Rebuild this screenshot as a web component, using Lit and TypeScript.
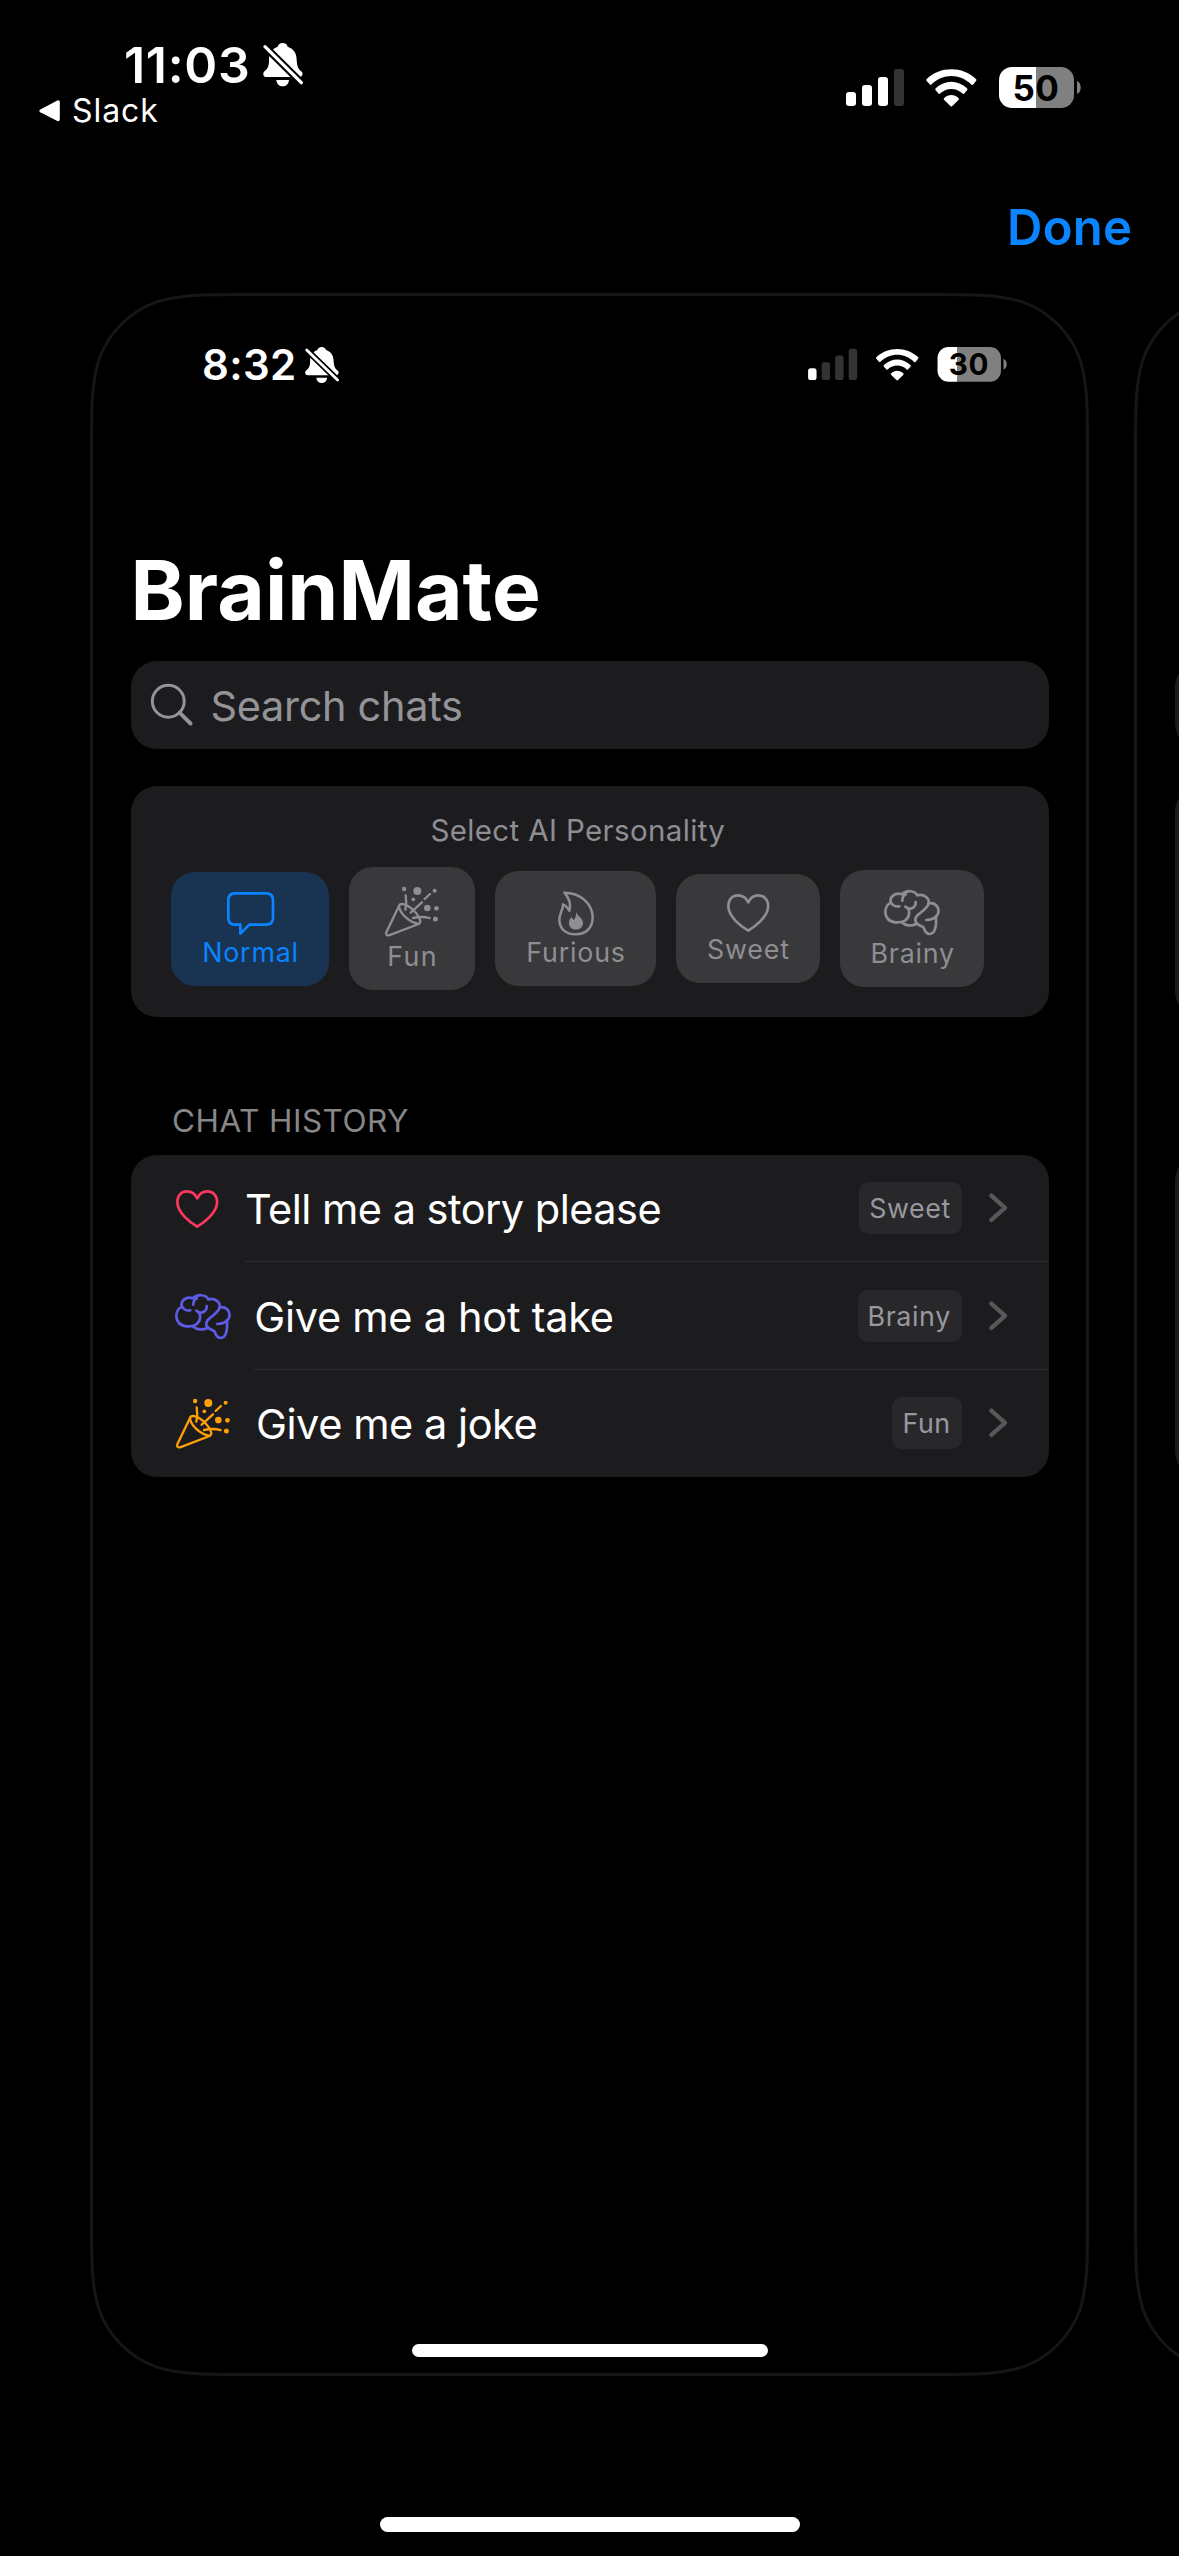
import { LitElement, html, svg, css } from "lit";
import type { SVGTemplateResult } from "lit";

type IconName = "bubble" | "popper" | "flame" | "heart" | "brain" | "search" | "chevron" | "bell" | "back";

interface IconDef {
  box: string;
  art: SVGTemplateResult;
}

const ICONS: Record<IconName, IconDef> = {
  bubble: {
    box: "321 365 141 129",
    art: svg`<path class="line" stroke-width="8" d="M345 369 H438 Q459 369 459 390 V442 Q459 463 438 463 H388 L361 490 V463 H345 Q325 463 325 442 V390 Q325 369 345 369Z"/>`,
  },
  popper: {
    box: "795 350 163 152",
    art: svg`
      <g class="line" stroke-width="7">
        <path d="M837 410 L799 489 Q796 499 807 498 L896 464"/>
        <path d="M837 412 Q838 402 850 404.500 C876 411 898 440 901 455 Q901 464 892 463 C866 457 842 434 837 412Z"/>
        <path d="M857 378 Q861 400 856 421"/>
        <path d="M906 399 L872 430"/>
        <path d="M914 389 L930 374"/>
        <path d="M879 446 Q906 440 929 446"/>
      </g>
      <g class="solid">
        <circle cx="852.500" cy="359" r="6.500"/><circle cx="892" cy="365" r="12"/>
        <circle cx="880" cy="390" r="5.500"/><circle cx="944" cy="364" r="6"/>
        <circle cx="922" cy="416" r="10"/><circle cx="949.500" cy="417" r="7"/>
        <circle cx="946.500" cy="449" r="7.500"/>
      </g>`,
  },
  flame: {
    box: "233 362 108 134",
    art: svg`
      <path class="line" stroke-width="7.500" d="M252 367 C300 367 336 400 337 440 C337 475 315 492 286 492 C255 492 237 475 237 448 C237 430 249 418 248 402 C256 405 262 413 267 422 C273 400 266 382 252 367Z"/>
      <path class="solid" d="M288 425 C292 440 308 442 308 458 C308 470 300 478 287 478 C274 478 266 470 266 458 C266 448 270 443 274 440 C276 445 278 447 280 449 C286 443 288 433 288 425Z"/>`,
  },
  heart: {
    box: "740 372 128 114",
    art: svg`<path class="line" stroke-width="8" d="M804 482 C785 471 744 441 744 408 C744 388 757 376 773 376 C787 376 798 384 804 397 C810 384 820 376 834 376 C850 376 864 388 864 408 C864 441 822 471 804 482Z"/>`,
  },
  brain: {
    box: "254 362 167 136",
    art: svg`
      <g class="line" stroke-width="8">
        <path d="M275 400 C251 411 250 454 288 459 C300 460 309 459 317 454 C333 442 334 420 318 412"/>
        <path d="M275 400 C269 384 286 368 308 375 C320 362 346 362 354 378 C375 373 391 387 388 402 C384 426 345 432 348 454 Q351 466 372 473 C376 482 378 494 391 494 C408 494 412 470 410 440"/>
        <path d="M309 460 C318 470 338 471 351 464"/>
        <path d="M388 402 C412 398 424 420 414 438 C406 449 396 452 381 452"/>
        <path d="M275 400 C280 408 289 413 300 411"/>
        <path d="M309 394 C309 386 312 378 320 375"/>
        <path d="M349 398 C351 412 337 421 326 417"/>
      </g>`,
  },
  search: {
    box: "92 131 125 125",
    art: svg`
      <circle class="line" cx="144" cy="183" r="48" stroke-width="9"/>
      <path class="line" d="M178 217 L211 250" stroke-width="12"/>`,
  },
  chevron: {
    box: "626 282 56 89",
    art: svg`<path class="line" stroke-width="13" d="M633 290 L674 326.500 L633 363"/>`,
  },
  bell: {
    box: "787 71 120 130",
    art: svg`
      <path class="solid" d="M846 71 C854 71 860 76 861 82 C880 88 888 103 888 122 C889 142 893 150 904 158 C908 163 905 173 897 173 H797 C787 173 786 162 790 157 C802 148 805 140 805 122 C805 103 813 88 831 82 C832 76 838 71 846 71Z"/>
      <path class="solid" d="M827 182 H865 C864 194 856 201 846 201 C836 201 828 194 827 182Z"/>
      <path d="M780 69 L914 202" stroke="#000" stroke-width="22"/>
      <path class="line" d="M793 82 L902 190" stroke-width="10"/>`,
  },
  back: {
    box: "0 0 63 63",
    art: svg`<path class="solid" d="M4 28 L55 1.500 Q62.500 -1 62.500 7 V56 Q62.500 64 55 61.500 L4 36 Q-2.500 32 4 28Z"/>`,
  },
};

class UiIcon extends LitElement {
  static properties = { name: {} };
  declare name: IconName;
  static styles = css`
    :host { display: block; flex: none; }
    .art { display: block; width: 100%; height: 100%; overflow: visible; }
    .line { fill: none; stroke: currentColor; stroke-linecap: round; stroke-linejoin: round; }
    .solid { fill: currentColor; }
  `;
  render() {
    const icon = ICONS[this.name];
    return html`<svg class="art" viewBox=${icon.box} preserveAspectRatio="none">${icon.art}</svg>`;
  }
}
customElements.define("ui-icon", UiIcon);

/* Signal bars, Wi-Fi and battery, drawn on a 235x41 board that scales as one. */
class StatusGlyphs extends LitElement {
  static properties = { bars: { type: Number }, level: { type: Number } };
  declare bars: number;
  declare level: number;
  static styles = css`
    :host { display: block; flex: none; }
    .board { display: block; width: 100%; height: 100%; overflow: visible; }
    .on { fill: #fff; }
    .off { fill: #333; }
    .rest { fill: #808080; }
    .level { font: 700 35px Inter, "Liberation Sans", sans-serif; letter-spacing: 0.5px; fill: #000; text-anchor: middle; }
  `;
  render() {
    const heights = [14, 21, 29, 37];
    const split = `${this.level}%`;
    return html`<svg class="board" viewBox="0 0 235 41">
      <defs>
        <linearGradient id="charge">
          <stop offset=${split} stop-color="#fff" />
          <stop offset=${split} stop-color="#808080" />
        </linearGradient>
      </defs>
      ${heights.map(
        (h, i) => svg`<rect class=${i < this.bars ? "on" : "off"} x=${i * 16} y=${39 - h} width="10" height=${h} rx="3"/>`,
      )}
      <g class="on" transform="translate(80 2) scale(0.33333) translate(-378 -86)">
        <path d="M380 116 C420 77 488 77 528 116 Q531 119 528 122 L519 133 Q516 135 513 132 C480 99 428 99 395 132 Q392 135 389 132 L380 122 Q377 119 380 116Z" />
        <path d="M407 144 C434 117.500 474 117.500 501 144 Q504 147 501 150 L492 160 Q490 162 487 159 C468 141.500 440 141.500 421 159 Q418 162 416 160 L407 150 Q404 147 407 144Z" />
        <path d="M432 174 C445 161 463 161 476 174 Q478 176 476 178 L457 197 Q454 200 451 197 L432 178 Q430 176 432 174Z" />
      </g>
      <rect x="153" y="0" width="75" height="41" rx="13" fill="url(#charge)" />
      <path class="rest" d="M231 14 C236 16 236 25 231 27Z" />
      <text class="level" x="190" y="33.500">${this.level}</text>
    </svg>`;
  }
}
customElements.define("status-glyphs", StatusGlyphs);

/* Rounded rectangle with continuous-curvature corners. */
function squircle(x: number, y: number, w: number, h: number, r: number): string {
  const a = 1.52866 * r, b = 1.08849 * r, c = 0.86841 * r, d = 0.63149 * r, e = 0.37282 * r, f = 0.16906 * r, g = 0.07491 * r;
  const R = x + w, B = y + h;
  return [
    `M${x + a} ${y}H${R - a}`,
    `C${R - b} ${y} ${R - c} ${y} ${R - d} ${y + g}`,
    `C${R - e} ${y + f} ${R - f} ${y + e} ${R - g} ${y + d}`,
    `C${R} ${y + c} ${R} ${y + b} ${R} ${y + a}V${B - a}`,
    `C${R} ${B - b} ${R} ${B - c} ${R - g} ${B - d}`,
    `C${R - f} ${B - e} ${R - e} ${B - f} ${R - d} ${B - g}`,
    `C${R - c} ${B} ${R - b} ${B} ${R - a} ${B}H${x + a}`,
    `C${x + b} ${B} ${x + c} ${B} ${x + d} ${B - g}`,
    `C${x + e} ${B - f} ${x + f} ${B - e} ${x + g} ${B - d}`,
    `C${x} ${B - c} ${x} ${B - b} ${x} ${B - a}V${y + a}`,
    `C${x} ${y + b} ${x} ${y + c} ${x + g} ${y + d}`,
    `C${x + f} ${y + e} ${x + e} ${y + f} ${x + d} ${y + g}`,
    `C${x + c} ${y} ${x + b} ${y} ${x + a} ${y}Z`,
  ].join("");
}

const PERSONALITIES: { label: string; icon: IconName; active?: boolean }[] = [
  { label: "Normal", icon: "bubble", active: true },
  { label: "Fun", icon: "popper" },
  { label: "Furious", icon: "flame" },
  { label: "Sweet", icon: "heart" },
  { label: "Brainy", icon: "brain" },
];

const CHATS: { title: string; tag: string; icon: IconName }[] = [
  { title: "Tell me a story please", tag: "Sweet", icon: "heart" },
  { title: "Give me a hot take", tag: "Brainy", icon: "brain" },
  { title: "Give me a joke", tag: "Fun", icon: "popper" },
];

class PhonePreview extends LitElement {
  static properties = { peek: { type: Boolean } };
  declare peek: boolean;
  static styles = css`
    :host { display: block; flex: none; }
    .card { position: relative; box-sizing: border-box; width: 999px; height: 2083px; padding: 0 40px 19.5px 41px; display: flex; flex-direction: column; }
    .outline { position: absolute; inset: 0; width: 999px; height: 2083px; fill: none; stroke: #161616; stroke-width: 3; pointer-events: none; }
    .status { flex: none; height: 143px; display: flex; align-items: center; padding: 0 42px 0 71px; }
    .clock { font-size: 42px; font-weight: 600; letter-spacing: 0.3px; line-height: 50px; }
    .bell { width: 34px; height: 36px; margin-left: 9px; margin-right: auto; }
    .glyphs { width: 199px; height: 34.7px; }
    .title { margin: 109.7px 0 0 -0.5px; height: 90px; font-size: 82px; font-weight: 700; line-height: 90px; letter-spacing: 0.1px; }
    .search { flex: none; box-sizing: border-box; margin-top: 25.3px; height: 88px; border-radius: 26px; background: #1c1c1e; color: #939398; display: flex; align-items: center; gap: 18px; padding-left: 20px; font-size: 41.5px; letter-spacing: -0.33px; }
    .search span { padding-top: 2px; }
    .lens { width: 41.5px; height: 41.5px; }
    .panel { flex: none; box-sizing: border-box; margin-top: 36.7px; height: 231.3px; border-radius: 26px; background: #1c1c1e; padding: 24.8px 64.6px 0 40.3px; display: flex; flex-direction: column; align-items: center; gap: 16.8px; }
    .caption { font-size: 29.5px; line-height: 40px; letter-spacing: 0.37px; color: #8e8e93; }
    .options { align-self: stretch; height: 122.7px; display: flex; align-items: center; justify-content: space-between; }
    .option { box-sizing: border-box; border-radius: 24px; background: #39393b; color: #8e8e93; padding: 20px 0 17px; display: flex; flex-direction: column; align-items: center; font-size: 26.8px; line-height: 34px; letter-spacing: 0.8px; text-indent: 0.8px; }
    .option.active { background: #193453; color: #0a84ff; }
    .option.bubble { width: 157.7px; }
    .option.popper { width: 125.5px; letter-spacing: 1.3px; }
    .option.flame { width: 160.7px; }
    .option.heart { width: 143.3px; }
    .option.brain { width: 144.3px; }
    .bubble .glyph { width: 47px; height: 43px; }
    .popper .glyph { width: 54.3px; height: 50.7px; margin: -1px 0 2px; }
    .flame .glyph { width: 36px; height: 44.6px; }
    .heart .glyph { width: 42.5px; height: 38px; }
    .brain .glyph { width: 55.6px; height: 45.3px; margin-bottom: 1px; }
    .section { margin: 84.2px 0 13.8px 41px; height: 40px; font-size: 31.5px; line-height: 40px; letter-spacing: 0.48px; color: #87878a; }
    .list { flex: none; height: 322.5px; border-radius: 26px; background: #1c1c1e; display: flex; flex-direction: column; }
    .row { flex: 1; display: flex; align-items: stretch; }
    .row .glyph { margin: 0; }
    .lead { display: flex; align-items: center; box-sizing: border-box; }
    .row.heart .lead { width: 114px; padding-left: 45px; color: #ff375f; }
    .row.brain .lead { width: 123.3px; padding-left: 43.7px; color: #5e5ce6; }
    .row.popper .lead { width: 125px; padding-left: 45px; color: #ff9f0a; }
    .row .body { flex: 1; display: flex; align-items: center; padding-right: 41.5px; border-bottom: 1.5px solid #2d2d2f; }
    .row:last-child .body { border-bottom-color: transparent; }
    .name { flex: 1; padding-top: 2px; font-size: 41.5px; line-height: 50px; color: #fff; }
    .heart .name { letter-spacing: -0.51px; }
    .brain .name { letter-spacing: -0.28px; }
    .popper .name { letter-spacing: -0.45px; }
    .tag { box-sizing: border-box; height: 52px; border-radius: 10px; background: #28282b; padding: 0 11.5px 0 10px; font-size: 26.8px; line-height: 52px; letter-spacing: 0.6px; color: #98989e; }
    .chevron { width: 18.7px; height: 29.6px; margin-left: 26.5px; color: #58585b; }
    .home { margin: auto auto 0; width: 356px; height: 13px; border-radius: 7px; background: #fff; }
    .peek { padding-top: 342.7px; }
    .peek .list { margin-top: 138px; }
  `;
  private outline() {
    return html`<svg class="outline" viewBox="0 0 999 2083"><path d=${squircle(1.5, 1.5, 996, 2080, 102)} /></svg>`;
  }
  render() {
    if (this.peek) {
      return html`<div class="card peek">
        ${this.outline()}
        <div class="search"></div>
        <div class="panel"></div>
        <div class="list"></div>
      </div>`;
    }
    return html`<div class="card">
      ${this.outline()}
      <div class="status">
        <span class="clock">8:32</span>
        <ui-icon class="bell" name="bell"></ui-icon>
        <status-glyphs class="glyphs" bars="1" level="30"></status-glyphs>
      </div>
      <div class="title">BrainMate</div>
      <div class="search"><ui-icon class="lens" name="search"></ui-icon><span>Search chats</span></div>
      <div class="panel">
        <div class="caption">Select AI Personality</div>
        <div class="options">
          ${PERSONALITIES.map(
            (p) => html`<div class="option ${p.icon} ${p.active ? "active" : ""}">
              <ui-icon class="glyph" name=${p.icon}></ui-icon><span>${p.label}</span>
            </div>`,
          )}
        </div>
      </div>
      <div class="section">CHAT HISTORY</div>
      <div class="list">
        ${CHATS.map(
          (c) => html`<div class="row ${c.icon}">
            <div class="lead"><ui-icon class="glyph" name=${c.icon}></ui-icon></div>
            <div class="body">
              <span class="name">${c.title}</span>
              <span class="tag">${c.tag}</span>
              <ui-icon class="chevron" name="chevron"></ui-icon>
            </div>
          </div>`,
        )}
      </div>
      <div class="home"></div>
    </div>`;
  }
}
customElements.define("phone-preview", PhonePreview);

class AppRoot extends LitElement {
  static styles = css`
    :host { display: block; }
    .screen { width: 1179px; height: 2556px; overflow: hidden; background: #000; color: #fff; display: flex; flex-direction: column; font-family: Inter, "Liberation Sans", sans-serif; }
    .status { flex: none; height: 130px; display: flex; justify-content: space-between; }
    .left { padding-top: 40px; }
    .time { display: flex; align-items: center; height: 50px; padding-left: 124px; font-size: 50px; font-weight: 600; letter-spacing: 0.7px; line-height: 50px; }
    .bell { width: 40px; height: 43.3px; margin-left: 12px; }
    .return { display: flex; align-items: center; height: 42px; padding-left: 38.5px; gap: 12.5px; font-size: 32px; line-height: 40px; letter-spacing: 0.95px; }
    .arrow { width: 21px; height: 21.5px; }
    .glyphs { width: 235px; height: 41px; margin: 67px 98px 0 0; }
    .toolbar { flex: none; display: flex; justify-content: flex-end; height: 60px; padding: 68px 46.7px 35px; font-size: 49px; font-weight: 600; line-height: 60px; letter-spacing: 0.27px; color: #0a84ff; }
    .gallery { flex: none; display: flex; gap: 45px; padding-left: 90px; overflow: hidden; }
    .home { margin: auto auto 24px; width: 420px; height: 15px; border-radius: 8px; background: #fff; }
  `;
  render() {
    return html`<div class="screen">
      <div class="status">
        <div class="left">
          <div class="time"><span>11:03</span><ui-icon class="bell" name="bell"></ui-icon></div>
          <div class="return"><ui-icon class="arrow" name="back"></ui-icon><span>Slack</span></div>
        </div>
        <status-glyphs class="glyphs" bars="3" level="50"></status-glyphs>
      </div>
      <div class="toolbar">Done</div>
      <div class="gallery">
        <phone-preview></phone-preview>
        <phone-preview peek></phone-preview>
      </div>
      <div class="home"></div>
    </div>`;
  }
}
customElements.define("app-root", AppRoot);
